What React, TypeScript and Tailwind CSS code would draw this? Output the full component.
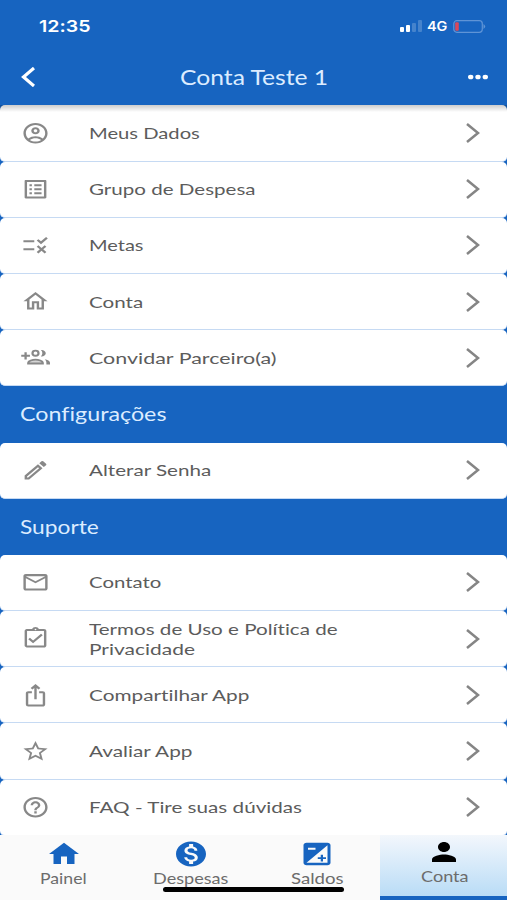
import { useLayoutEffect, useRef, useState } from "react";
import type { ComponentType, SVGProps } from "react";
import {
  MdExposure,
  MdHelpOutline,
  MdHome,
  MdMonetizationOn,
  MdOutlineAccountCircle,
  MdOutlineAssignmentTurnedIn,
  MdOutlineHome,
  MdOutlineIosShare,
  MdOutlineListAlt,
  MdOutlineMail,
  MdOutlineModeEdit,
  MdOutlineRule,
  MdPerson,
  MdStarBorder,
} from "react-icons/md";

type Icon = ComponentType<SVGProps<SVGSVGElement>>;

interface MenuItem {
  icon: Icon;
  lines: { text: string; width: number }[];
}

interface Tab {
  icon: Icon;
  label: string;
  width: number;
}

function InviteIcon(props: SVGProps<SVGSVGElement>) {
  return (
    <svg viewBox="0 0 24 24" fill="none" stroke="currentColor" {...props}>
      <path d="M0.2 10.6h7.2M3.8 7v7.2" strokeWidth="1.9" />
      <circle cx="12" cy="8" r="2.5" strokeWidth="1.8" />
      <path
        d="M6 18.1v-0.7c0-1.9 3.6-3 6-3s6 1.1 6 3v0.7z"
        fill="currentColor"
        fillOpacity="0.35"
        strokeWidth="1.8"
      />
      <path d="M16.5 5c1.8-0.4 4 0.9 4 3.1s-2.2 3.5-4 3.1c1.6-1.9 1.6-4.3 0-6.2z" fill="currentColor" stroke="none" />
      <path d="M19.6 13.9c2.4 0.5 4.4 1.6 4.4 3.5V19h-3v-1.6c0-1.4-0.4-2.5-1.4-3.5z" fill="currentColor" stroke="none" />
    </svg>
  );
}

const ACCOUNT_ITEMS: MenuItem[] = [
  { icon: MdOutlineAccountCircle, lines: [{ text: "Meus Dados", width: 111 }] },
  { icon: MdOutlineListAlt, lines: [{ text: "Grupo de Despesa", width: 167 }] },
  { icon: MdOutlineRule, lines: [{ text: "Metas", width: 55 }] },
  { icon: MdOutlineHome, lines: [{ text: "Conta", width: 54 }] },
  { icon: InviteIcon, lines: [{ text: "Convidar Parceiro(a)", width: 187.5 }] },
];

const SETTINGS_ITEMS: MenuItem[] = [
  { icon: MdOutlineModeEdit, lines: [{ text: "Alterar Senha", width: 122.5 }] },
];

const SUPPORT_ITEMS: MenuItem[] = [
  { icon: MdOutlineMail, lines: [{ text: "Contato", width: 72.5 }] },
  {
    icon: MdOutlineAssignmentTurnedIn,
    lines: [
      { text: "Termos de Uso e Política de", width: 248.5 },
      { text: "Privacidade", width: 106 },
    ],
  },
  { icon: MdOutlineIosShare, lines: [{ text: "Compartilhar App", width: 161 }] },
  { icon: MdStarBorder, lines: [{ text: "Avaliar App", width: 104 }] },
  { icon: MdHelpOutline, lines: [{ text: "FAQ - Tire suas dúvidas", width: 213 }] },
];

const TABS: Tab[] = [
  { icon: MdHome, label: "Painel", width: 47 },
  { icon: MdMonetizationOn, label: "Despesas", width: 76 },
  { icon: MdExposure, label: "Saldos", width: 52 },
  { icon: MdPerson, label: "Conta", width: 47 },
];

// Wide lettering: stretches the text horizontally to the given width
function WideText({ text, width, className = "" }: { text: string; width: number; className?: string }) {
  const ref = useRef<HTMLSpanElement>(null);
  const [scale, setScale] = useState(1);

  useLayoutEffect(() => {
    if (ref.current) setScale(width / ref.current.offsetWidth);
  }, [width]);

  return (
    <span className={`block ${className}`} style={{ width }}>
      <span
        ref={ref}
        className="inline-block origin-left whitespace-nowrap [font-variant-ligatures:none]"
        style={{ transform: `scaleX(${scale})` }}
      >
        {text}
      </span>
    </span>
  );
}

function MenuRow({ item }: { item: MenuItem }) {
  const Icon = item.icon;
  return (
    <button
      type="button"
      className="flex h-[56.2px] w-full shrink-0 items-center rounded-[5px] border-b border-[#c6daf3] bg-white pl-[20.6px] pr-[27px] text-left"
    >
      <Icon className="h-[24.5px] w-[29px] shrink-0 text-[#888]" preserveAspectRatio="none" />
      <span className="ml-[39px] flex-1 text-base leading-5 text-[#5c5c5c]">
        {item.lines.map((line) => (
          <WideText key={line.text} text={line.text} width={line.width} />
        ))}
      </span>
      <svg className="h-5 w-[14px]" viewBox="0 0 14 20" fill="none" stroke="#858585" strokeWidth="2.5">
        <path d="M1 1L12 10L1 19" />
      </svg>
    </button>
  );
}

function SectionTitle({ text, width }: { text: string; width: number }) {
  return (
    <h2 className="flex h-[56.2px] shrink-0 items-center pl-[20.4px] text-[19px] text-[#dcecff]">
      <WideText text={text} width={width} />
    </h2>
  );
}

function StatusBar() {
  return (
    <div className="flex h-[52px] items-center justify-between pl-[39px] pr-[21px] text-white">
      <WideText text="12:35" width={51} className="pt-px font-['Inter'] text-[16.5px] font-semibold" />
      <div className="flex items-center">
        <div className="mr-[5px] flex h-3 items-end gap-[1.5px]">
          <span className="h-[5px] w-[4.5px] rounded-[1px] bg-white" />
          <span className="h-[7px] w-[4.5px] rounded-[1px] bg-white" />
          <span className="h-[9.5px] w-[4.5px] rounded-[1px] bg-white/20" />
          <span className="h-3 w-[4.5px] rounded-[1px] bg-white/20" />
        </div>
        <WideText text="4G" width={20} className="font-['Inter'] text-[13px] font-semibold leading-4" />
        <svg className="ml-1.5 h-[13px] w-[33px]" viewBox="0 0 33 13" fill="none">
          <rect x="0.8" y="0.7" width="28.5" height="11.6" rx="3" stroke="#5f94d6" strokeWidth="1.2" />
          <rect x="2.2" y="2.3" width="3.6" height="8.4" rx="1" fill="#d9485a" />
          <path d="M30.5 4q3.4 2.5 0 5z" fill="#5f94d6" />
        </svg>
      </div>
    </div>
  );
}

export default function App() {
  return (
    <div className="flex h-[900px] w-[507px] flex-col overflow-hidden bg-[#1764c0] font-['Lato','Noto_Sans',sans-serif]">
      <header className="h-[105.4px] shrink-0">
        <StatusBar />
        <div className="flex h-[50px] items-center justify-between pl-[21px] pr-[19px]">
          <svg className="h-5 w-[14px]" viewBox="0 0 14 20" fill="none" stroke="white" strokeWidth="3.2">
            <path d="M13 1L2.5 10L13 19" />
          </svg>
          <h1 className="pl-1 text-[21px] text-[#dcecff]">
            <WideText text="Conta Teste 1" width={148} />
          </h1>
          <svg className="h-1.5 w-5" viewBox="0 0 20 6" fill="white">
            <ellipse cx="2.7" cy="3" rx="2.7" ry="2.3" />
            <ellipse cx="10" cy="3" rx="2.7" ry="2.3" />
            <ellipse cx="17.3" cy="3" rx="2.7" ry="2.3" />
          </svg>
        </div>
      </header>

      <main className="relative flex h-[729.6px] shrink-0 flex-col overflow-hidden">
        <div className="absolute inset-x-0 top-0 h-[7px] bg-linear-to-b from-black/20 to-transparent" />
        {ACCOUNT_ITEMS.map((item) => (
          <MenuRow key={item.lines[0].text} item={item} />
        ))}
        <SectionTitle text="Configurações" width={147} />
        {SETTINGS_ITEMS.map((item) => (
          <MenuRow key={item.lines[0].text} item={item} />
        ))}
        <SectionTitle text="Suporte" width={79} />
        {SUPPORT_ITEMS.map((item) => (
          <MenuRow key={item.lines[0].text} item={item} />
        ))}
      </main>

      <nav className="relative grid flex-1 grid-cols-4 bg-[#fafafa]">
        {TABS.map((tab, i) => {
          const Icon = tab.icon;
          const active = i === TABS.length - 1;
          return (
            <button
              key={tab.label}
              type="button"
              className={`flex flex-col items-center pl-px ${
                active
                  ? "border-b-4 border-[#1764c0] bg-linear-to-b from-[#f3f7fc] to-[#b9dcf6] pt-[2px] text-black"
                  : "pt-[4px] text-[#1764c0]"
              }`}
            >
              <Icon className="h-[30px] w-[36px]" preserveAspectRatio="none" />
              <WideText text={tab.label} width={tab.width} className="text-left text-[15px] leading-[18px] text-[#6c6c6c]" />
            </button>
          );
        })}
        {/* Home indicator */}
        <div className="absolute bottom-[8px] left-[163px] h-[5px] w-[181px] rounded-full bg-black" />
      </nav>
    </div>
  );
}
